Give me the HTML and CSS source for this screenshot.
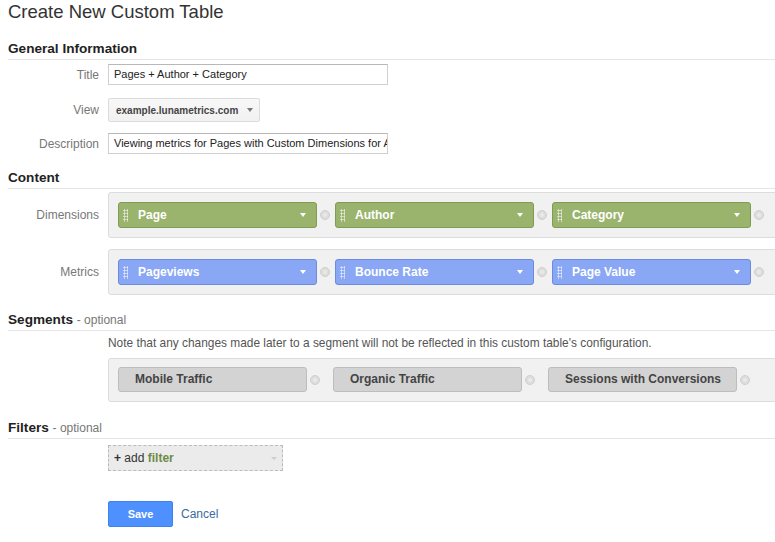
FILE: index.html
```html
<!DOCTYPE html>
<html>
<head>
<meta charset="utf-8">
<link rel="stylesheet" href="styles.css">
</head>
<body>
<div class="page">
  <h1 class="title">Create New Custom Table</h1>

  <h2 class="section first">General Information</h2>
  <div class="row r-title">
    <label class="lbl">Title</label>
    <div class="input">Pages + Author + Category</div>
  </div>
  <div class="row r-view">
    <label class="lbl">View</label>
    <div class="select"><span class="stext">example.lunametrics.com</span><span class="tri"></span></div>
  </div>
  <div class="row r-desc">
    <label class="lbl">Description</label>
    <div class="input clip">Viewing metrics for Pages with Custom Dimensions for Author and Category</div>
  </div>

  <h2 class="section s-content">Content</h2>
  <div class="row r-dim">
    <label class="lbl">Dimensions</label>
    <div class="box">
      <div class="chip green"><span class="grip"></span><span class="ctext">Page</span><span class="ctri"></span></div>
      <span class="rm"></span>
      <div class="chip green"><span class="grip"></span><span class="ctext">Author</span><span class="ctri"></span></div>
      <span class="rm"></span>
      <div class="chip green"><span class="grip"></span><span class="ctext">Category</span><span class="ctri"></span></div>
      <span class="rm"></span>
    </div>
  </div>
  <div class="row r-met">
    <label class="lbl">Metrics</label>
    <div class="box">
      <div class="chip blue"><span class="grip"></span><span class="ctext">Pageviews</span><span class="ctri"></span></div>
      <span class="rm"></span>
      <div class="chip blue"><span class="grip"></span><span class="ctext">Bounce Rate</span><span class="ctri"></span></div>
      <span class="rm"></span>
      <div class="chip blue"><span class="grip"></span><span class="ctext">Page Value</span><span class="ctri"></span></div>
      <span class="rm"></span>
    </div>
  </div>

  <h2 class="section s-seg">Segments <span class="opt">- optional</span></h2>
  <p class="note">Note that any changes made later to a segment will not be reflected in this custom table's configuration.</p>
  <div class="box segbox">
    <div class="seg">Mobile Traffic</div><span class="rm srm"></span>
    <div class="seg">Organic Traffic</div><span class="rm srm"></span>
    <div class="seg">Sessions with Conversions</div><span class="rm srm"></span>
  </div>

  <h2 class="section s-filt">Filters <span class="opt">- optional</span></h2>
  <div class="addfilter"><span class="plus">+</span> add <span class="fw">filter</span><span class="ftri"></span></div>

  <div class="actions">
    <button class="save">Save</button>
    <a class="cancel">Cancel</a>
  </div>
</div>
</body>
</html>
```

FILE: styles.css
```css
html, body {
  margin: 0;
  padding: 0;
  overflow: hidden;
  background: #fff;
}
body {
  font-family: Arial, "Liberation Sans", sans-serif;
  color: #222;
}
.page {
  width: 775px;
  padding: 0 0 0 8px;
}
.title {
  margin: 2px 0 0;
  font-size: 18.5px;
  line-height: 20px;
  font-weight: normal;
  color: #333;
}
.section {
  margin: 0;
  font-size: 13.6px;
  line-height: 16px;
  font-weight: bold;
  color: #222;
  padding-bottom: 2px;
  border-bottom: 1px solid #e5e5e5;
}
.section.first { margin-top: 19px; }
.s-content { margin-top: 16px; }
.s-seg { margin-top: 17px; }
.s-filt { margin-top: 18px; }
.opt {
  font-weight: normal;
  font-size: 12px;
  color: #777;
}
.row {
  display: flex;
  align-items: center;
}
.lbl {
  width: 91px;
  margin-right: 9px;
  text-align: right;
  font-size: 12px;
  color: #777;
  flex: none;
}
.r-title { margin-top: 4px; }
.r-view { margin-top: 13px; }
.r-desc { margin-top: 11px; }
.r-dim { margin-top: 3px; }
.r-met { margin-top: 11px; }
.input {
  box-sizing: border-box;
  width: 280px;
  height: 21px;
  border: 1px solid #d0d0d0;
  border-top-color: #b8b8b8;
  padding: 0 5px;
  font-size: 11px;
  line-height: 19px;
  color: #222;
  white-space: nowrap;
  overflow: hidden;
}
.select {
  box-sizing: border-box;
  width: 152px;
  height: 24px;
  border: 1px solid #dcdcdc;
  border-radius: 2px;
  background: linear-gradient(#f8f8f8, #f1f1f1);
  font-size: 10px;
  font-weight: bold;
  color: #444;
  padding-left: 7px;
  display: flex;
  align-items: center;
}
.stext { flex: none; }
.tri {
  width: 0;
  height: 0;
  border-left: 3.5px solid transparent;
  border-right: 3.5px solid transparent;
  border-top: 4px solid #777;
  margin-left: 9px;
}
.box {
  box-sizing: border-box;
  flex: 1;
  display: flex;
  align-items: center;
  background: #f1f1f1;
  border: 1px solid #dcdcdc;
  border-radius: 3px;
  padding: 9px;
  min-width: 0;
}
.chip {
  box-sizing: border-box;
  width: 199px;
  height: 26px;
  border-radius: 3px;
  display: flex;
  align-items: center;
  flex: none;
  color: #fff;
  font-size: 12px;
  font-weight: bold;
}
.green {
  background: #9ab46e;
  border: 1px solid #7f9b55;
}
.blue {
  background: #89a7f4;
  border: 1px solid #6b8cdc;
}
.grip {
  width: 5px;
  height: 13px;
  margin-left: 4px;
  margin-right: 10px;
  background-image: radial-gradient(circle, rgba(255,255,255,0.75) 0.9px, transparent 1.2px);
  background-size: 3px 3px;
  flex: none;
}
.ctext { flex: 1; }
.ctri {
  width: 0;
  height: 0;
  border-left: 3px solid transparent;
  border-right: 3px solid transparent;
  border-top: 4px solid #fff;
  margin-right: 10px;
}
.rm {
  box-sizing: border-box;
  width: 10px;
  height: 10px;
  border-radius: 50%;
  background: #ddd;
  border: 1px solid #cfcfcf;
  flex: none;
  margin: 0 5px 0 3px;
  position: relative;
}
.rm::after {
  content: "";
  position: absolute;
  left: 2px;
  top: 2px;
  width: 4px;
  height: 4px;
  border-radius: 50%;
  background: #e9e9e9;
}
.note {
  margin: 5px 0 0 100px;
  font-size: 11.9px;
  line-height: 14px;
  color: #555;
}
.segbox {
  margin: 8px 0 0 100px;
  padding: 8px 9px 9px;
}
.seg {
  box-sizing: border-box;
  width: 189px;
  height: 25px;
  flex: none;
  background: #d3d3d3;
  border: 1px solid #bdbdbd;
  border-radius: 3px;
  padding-left: 16px;
  font-size: 12px;
  font-weight: bold;
  color: #444;
  line-height: 23px;
}
.srm { margin: 0 13px 0 3px; }
.addfilter {
  box-sizing: border-box;
  margin: 6px 0 0 100px;
  width: 175px;
  height: 26px;
  border: 1px dashed #bbb;
  background: #ebebeb;
  font-size: 12px;
  color: #333;
  display: flex;
  align-items: center;
  padding-left: 5px;
  white-space: pre;
}
.plus { font-weight: bold; }
.fw {
  font-weight: bold;
  color: #6d8b47;
  flex: 1;
}
.ftri {
  width: 0;
  height: 0;
  border-left: 3px solid transparent;
  border-right: 3px solid transparent;
  border-top: 3px solid #ccc;
  margin-right: 5px;
}
.actions {
  margin: 30px 0 0 100px;
  display: flex;
  align-items: center;
}
.save {
  box-sizing: border-box;
  width: 65px;
  height: 26px;
  background: #4d90fe;
  border: 1px solid #3d82f0;
  border-radius: 2px;
  color: #fff;
  font-family: Arial, "Liberation Sans", sans-serif;
  font-size: 11px;
  font-weight: bold;
  padding: 0;
}
.cancel {
  margin-left: 8px;
  font-size: 12px;
  color: #3b6aa3;
}
```
